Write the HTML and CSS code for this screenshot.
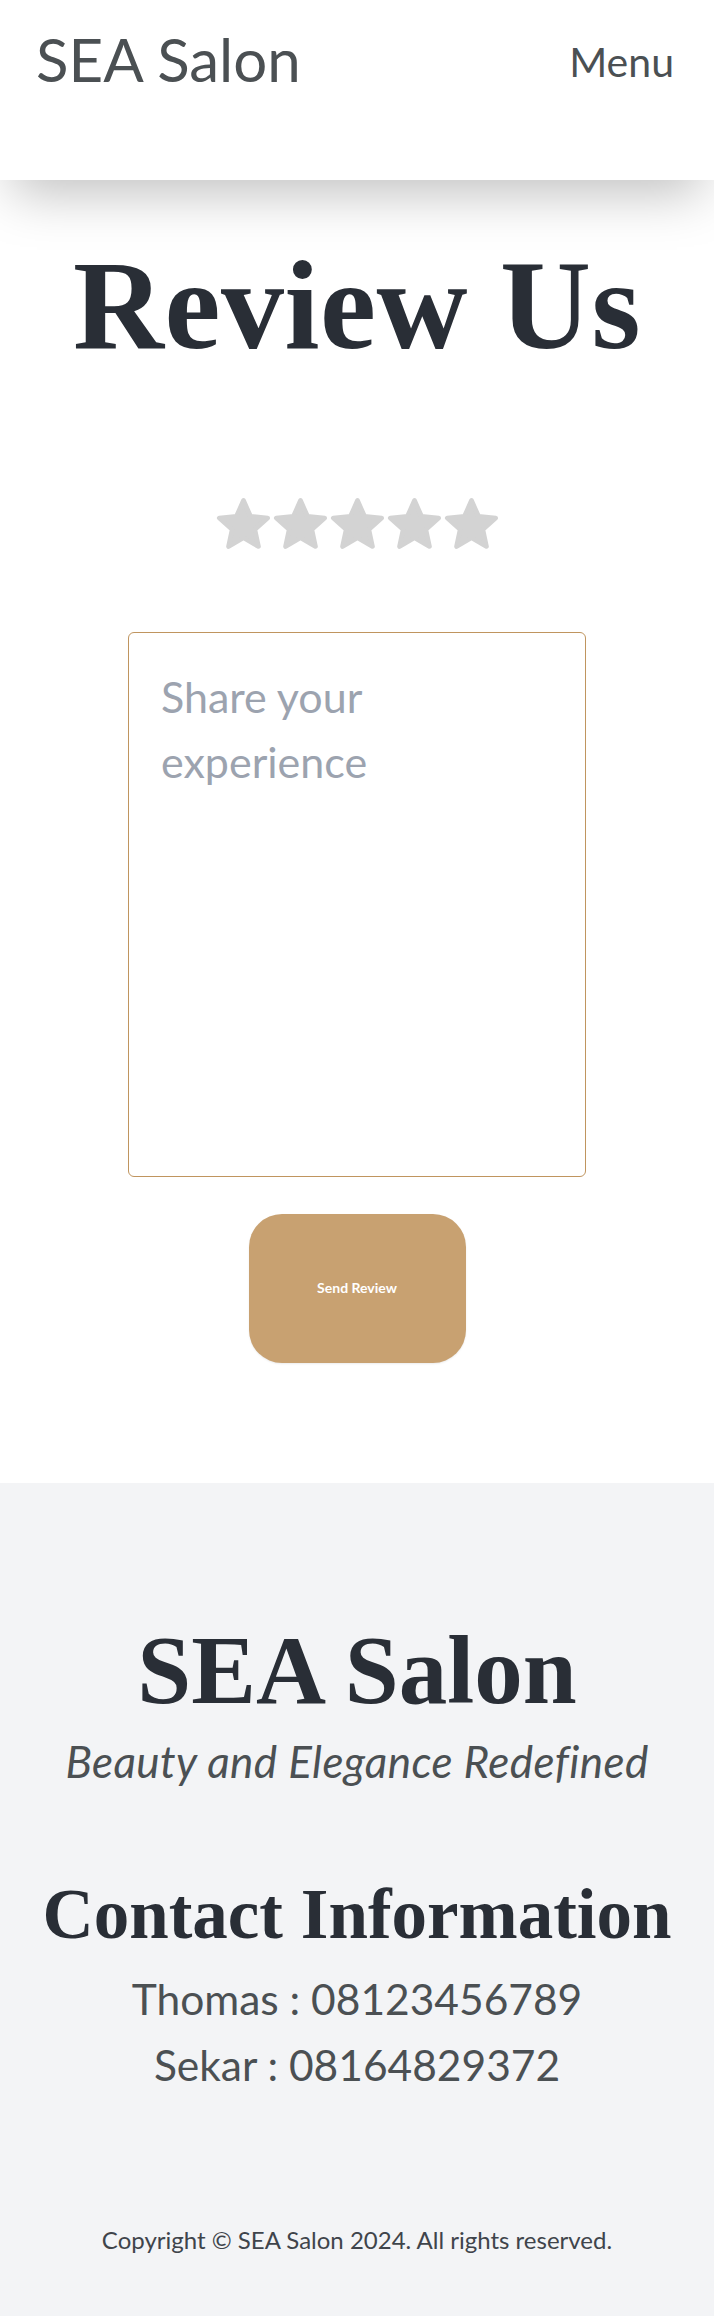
FILE: index.html
```html
<!DOCTYPE html>
<html lang="en">
<head>
<meta charset="utf-8">
<title>Review Us - SEA Salon</title>
<link rel="stylesheet" href="styles.css">
</head>
<body>
<header class="site-header">
  <div class="bar">
    <a class="logo" href="#">SEA Salon</a>
    <button class="menu-btn" type="button">Menu</button>
  </div>
</header>

<main class="review">
  <h1 class="review-title">Review Us</h1>
  <div class="stars" aria-label="Rating">
    <svg class="star" viewBox="0 0 24 24"><polygon points="12,2.32 14.94,8.98 22.18,9.71 16.76,14.57 18.29,21.68 12,18.02 5.71,21.68 7.24,14.57 1.82,9.71 9.06,8.98"/></svg>
    <svg class="star" viewBox="0 0 24 24"><polygon points="12,2.32 14.94,8.98 22.18,9.71 16.76,14.57 18.29,21.68 12,18.02 5.71,21.68 7.24,14.57 1.82,9.71 9.06,8.98"/></svg>
    <svg class="star" viewBox="0 0 24 24"><polygon points="12,2.32 14.94,8.98 22.18,9.71 16.76,14.57 18.29,21.68 12,18.02 5.71,21.68 7.24,14.57 1.82,9.71 9.06,8.98"/></svg>
    <svg class="star" viewBox="0 0 24 24"><polygon points="12,2.32 14.94,8.98 22.18,9.71 16.76,14.57 18.29,21.68 12,18.02 5.71,21.68 7.24,14.57 1.82,9.71 9.06,8.98"/></svg>
    <svg class="star" viewBox="0 0 24 24"><polygon points="12,2.32 14.94,8.98 22.18,9.71 16.76,14.57 18.29,21.68 12,18.02 5.71,21.68 7.24,14.57 1.82,9.71 9.06,8.98"/></svg>
  </div>
  <textarea class="review-input" placeholder="Share your experience"></textarea>
  <button class="send-btn" type="button">Send Review</button>
</main>

<footer class="site-footer">
  <h2 class="footer-brand">SEA Salon</h2>
  <p class="tagline">Beauty and Elegance Redefined</p>
  <h2 class="contact-title">Contact Information</h2>
  <p class="contact-line">Thomas : 08123456789</p>
  <p class="contact-line">Sekar : 08164829372</p>
  <p class="copyright">Copyright © SEA Salon 2024. All rights reserved.</p>
</footer>
</body>
</html>
```

FILE: styles.css
```css
* {
  box-sizing: border-box;
}

html, body {
  margin: 0;
  padding: 0;
}

body {
  font-family: "Lato", "Liberation Sans", sans-serif;
  color: #4b5563;
  background: #ffffff;
}

h1, h2, p {
  margin: 0;
}

.site-header {
  position: relative;
  z-index: 2;
  height: 180px;
  padding: 23px 40px 0 36px;
  background: #ffffff;
  box-shadow: 0 25px 50px -12px rgba(0, 0, 0, 0.25);
}

.bar {
  display: flex;
  align-items: center;
  justify-content: space-between;
}

.logo {
  font-size: 60px;
  line-height: 1.2;
  color: #4b5053;
  text-decoration: none;
}

.menu-btn {
  font-family: inherit;
  font-size: 41px;
  line-height: 1.2;
  color: #4b5053;
  background: none;
  border: 0;
  padding: 5px 0 0;
}

.review {
  display: flex;
  flex-direction: column;
  align-items: center;
  padding: 63px 0 120px;
}

.review-title {
  font-family: "Liberation Serif", "DejaVu Serif", serif;
  font-weight: 700;
  font-size: 126px;
  line-height: 1;
  color: #292e36;
  letter-spacing: 0.5px;
}

.stars {
  display: flex;
  margin-top: 126px;
}

.star {
  width: 57px;
  height: 57px;
  display: block;
}

.star polygon {
  fill: #d3d3d3;
  stroke: #d3d3d3;
  stroke-width: 2;
  stroke-linejoin: round;
}

.review-input {
  display: block;
  margin-top: 80px;
  width: 458px;
  height: 545px;
  padding: 32px;
  border: 1px solid #c0955f;
  border-radius: 6px;
  resize: none;
  font-family: "Lato", "Liberation Sans", sans-serif;
  font-size: 43px;
  line-height: 1.5;
  color: #374151;
  background: #ffffff;
  outline: none;
}

.review-input::placeholder {
  color: #9ca3af;
}

.send-btn {
  margin-top: 37px;
  width: 217px;
  height: 149px;
  border: 0;
  border-radius: 33px;
  background: #c8a171;
  color: #ffffff;
  font-family: "Lato", "Liberation Sans", sans-serif;
  font-weight: 700;
  font-size: 14px;
  padding-bottom: 3px;
  box-shadow: 0 1px 2px rgba(0, 0, 0, 0.08);
}

.site-footer {
  background: #f3f4f6;
  padding: 139px 0 60px;
  display: flex;
  flex-direction: column;
  align-items: center;
  text-align: center;
}

.footer-brand {
  font-family: "Liberation Serif", "DejaVu Serif", serif;
  font-weight: 700;
  font-size: 97px;
  line-height: 1;
  color: #292e36;
}

.tagline {
  margin-top: 11px;
  font-style: italic;
  font-size: 44px;
  letter-spacing: 0.4px;
  line-height: 1.45;
  color: #4b5053;
}

.contact-title {
  margin-top: 85px;
  font-family: "Liberation Serif", "DejaVu Serif", serif;
  font-weight: 700;
  font-size: 71px;
  line-height: 1;
  color: #292e36;
}

.contact-line {
  font-size: 42.5px;
  line-height: 66px;
  color: #4b5053;
}

.contact-title + .contact-line {
  margin-top: 16px;
}

.copyright {
  margin-top: 124px;
  font-size: 24px;
  line-height: 1.5;
  color: #3f444b;
}
```
